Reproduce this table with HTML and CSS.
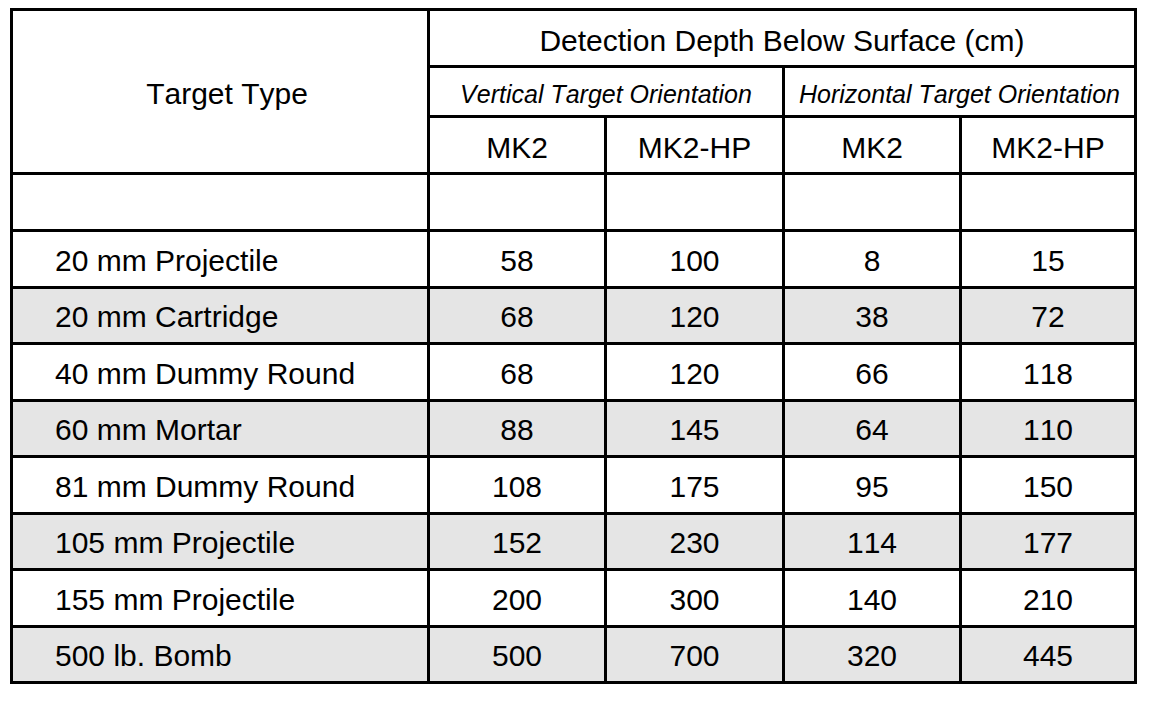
FILE: index.html
```html
<!DOCTYPE html>
<html lang="en">
<head>
<meta charset="utf-8">
<title>Detection Depth Below Surface</title>
<link rel="stylesheet" href="styles.css">
</head>
<body>
<div class="sheet">
  <div class="cell target">Target Type</div>
  <div class="cell title">Detection Depth Below Surface (cm)</div>
  <div class="cell orient">Vertical Target Orientation</div>
  <div class="cell orient">Horizontal Target Orientation</div>
  <div class="cell model">MK2</div>
  <div class="cell model">MK2-HP</div>
  <div class="cell model">MK2</div>
  <div class="cell model">MK2-HP</div>

  <div class="cell"></div>
  <div class="cell"></div>
  <div class="cell"></div>
  <div class="cell"></div>
  <div class="cell"></div>

  <div class="cell name">20 mm Projectile</div>
  <div class="cell">58</div><div class="cell">100</div><div class="cell">8</div><div class="cell">15</div>

  <div class="cell name shade">20 mm Cartridge</div>
  <div class="cell shade">68</div><div class="cell shade">120</div><div class="cell shade">38</div><div class="cell shade">72</div>

  <div class="cell name">40 mm Dummy Round</div>
  <div class="cell">68</div><div class="cell">120</div><div class="cell">66</div><div class="cell">118</div>

  <div class="cell name shade">60 mm Mortar</div>
  <div class="cell shade">88</div><div class="cell shade">145</div><div class="cell shade">64</div><div class="cell shade">110</div>

  <div class="cell name">81 mm Dummy Round</div>
  <div class="cell">108</div><div class="cell">175</div><div class="cell">95</div><div class="cell">150</div>

  <div class="cell name shade">105 mm Projectile</div>
  <div class="cell shade">152</div><div class="cell shade">230</div><div class="cell shade">114</div><div class="cell shade">177</div>

  <div class="cell name">155 mm Projectile</div>
  <div class="cell">200</div><div class="cell">300</div><div class="cell">140</div><div class="cell">210</div>

  <div class="cell name shade">500 lb. Bomb</div>
  <div class="cell shade">500</div><div class="cell shade">700</div><div class="cell shade">320</div><div class="cell shade">445</div>
</div>
</body>
</html>
```
FILE: styles.css
```css
html, body {
  margin: 0;
  padding: 0;
  background: #ffffff;
}

body {
  padding: 8px 0 0 10px;
  font-family: "Liberation Sans", Arial, sans-serif;
  color: #000000;
  font-kerning: none;
}

.sheet {
  display: grid;
  grid-template-columns: 417px 177px 178px 177px 175px;
  grid-template-rows: 57px 50px 57px 57px repeat(8, 56.5px);
  width: 1127px;
  box-sizing: border-box;
  border-top: 3px solid #000;
  border-left: 3px solid #000;
}

.cell {
  box-sizing: border-box;
  border-right: 3px solid #000;
  border-bottom: 3px solid #000;
  display: flex;
  align-items: center;
  justify-content: center;
  padding-top: 4px;
  font-size: 30px;
  line-height: 1;
  white-space: nowrap;
  background: #ffffff;
}

.target {
  grid-row: 1 / span 3;
  grid-column: 1;
  padding-left: 14px;
}

.title {
  grid-column: 2 / span 4;
  padding-top: 6px;
}

.orient {
  grid-column: span 2;
  font-style: italic;
  font-size: 25px;
  padding-top: 6px;
}

.model {
  padding-top: 6px;
}

.name {
  justify-content: flex-start;
  padding-left: 42px;
}

.shade {
  background: #e5e5e5;
}
```
